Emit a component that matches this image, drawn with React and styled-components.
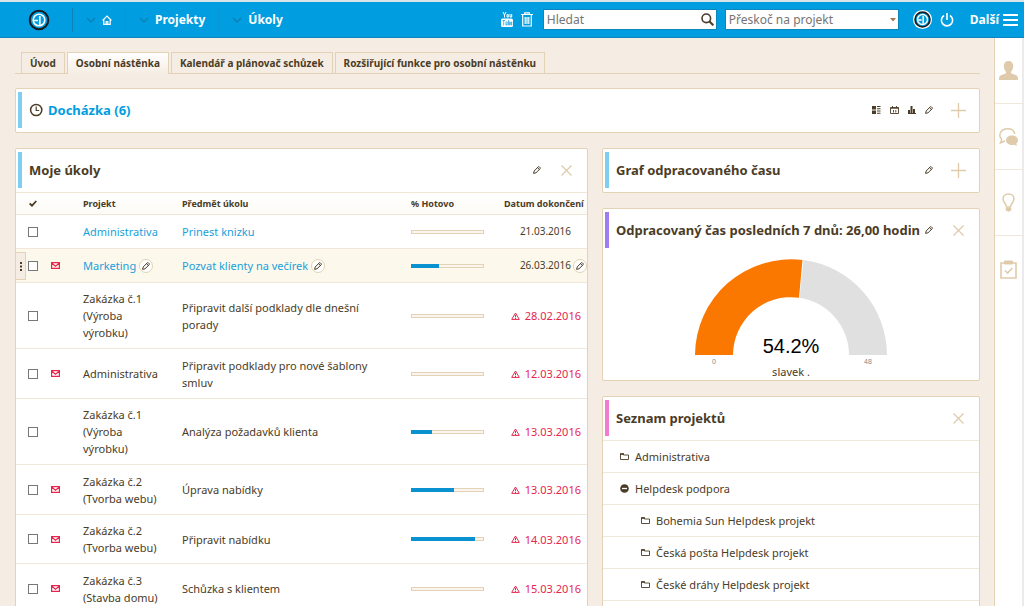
import React from "react";
import styled, { createGlobalStyle, css } from "styled-components";

const c = {
  blue: "#009ee0",
  link: "#1a9fdb",
  text: "#4a3c26",
  bg: "#f5ede3",
  line: "#e3d2b5",
  soft: "#f0e7d8",
  tan: "#dfcbab",
  red: "#e6264f",
};

const Global = createGlobalStyle`
  * { box-sizing: border-box; }
  html { scrollbar-width: none; }
  body { margin: 0; background: ${c.bg}; color: ${c.text};
    font: 11px/17px "Noto Sans", "Open Sans", sans-serif; }
  button { font: inherit; color: inherit; background: none; border: 0; padding: 0; margin: 0; cursor: pointer; }
  a { color: inherit; text-decoration: none; }
  svg { display: block; flex: none; }
`;

const Header = styled.header`
  display: flex;
  align-items: center;
  height: 38px;
  padding: 0 6px 0 28px;
  background: ${c.blue};
  border-top: 2px solid #d9e3e8;
  border-bottom: 1px solid #0b87bd;
  color: #fff;
  font-size: 12px;
  font-weight: 700;
`;

const MainNav = styled.nav`
  display: flex;
  align-items: center;
  margin-left: 22px;
  border-left: 1px solid #0b83b8;
  height: 24px;
  flex: 1;
`;

const NavItem = styled.a`
  display: flex;
  align-items: center;
  gap: 6px;
  height: 24px;
  padding: 0 13px;
  & + & { border-left: 1px solid #0597d6; }
`;

const Tools = styled.div`
  display: flex;
  align-items: center;
  gap: 8px;
`;

const SearchBox = styled.label`
  display: flex;
  align-items: center;
  width: 174px;
  height: 21px;
  margin-left: 2px;
  padding: 0 2px 0 3px;
  background: #fff;
  border: 1px solid #0b87bd;
`;

const Field = styled.input`
  flex: 1;
  min-width: 0;
  border: 0;
  outline: 0;
  padding: 0;
  background: none;
  font: inherit;
  font-weight: 400;
  &::placeholder { color: #757575; opacity: 1; }
`;

const JumpBox = styled(SearchBox)`
  margin-left: 0;
`;

const IconLink = styled.a`
  display: flex;
  margin-left: ${(p) => p.$gap || 0}px;
`;

const More = styled.button`
  display: flex;
  align-items: center;
  gap: 4px;
  margin-left: 8px;
  font-weight: 700;
`;

const Body = styled.div`
  display: flex;
  min-height: calc(100vh - 38px);
`;

const Main = styled.main`
  flex: 1;
  min-width: 0;
  padding: 14px 14px 15px 15px;
`;

const Tabs = styled.nav`
  display: flex;
  gap: 2px;
  padding-left: 6px;
  border-bottom: 1px solid ${c.line};
  margin-bottom: 14px;
`;

const Tab = styled.a`
  height: 21px;
  padding: 0 8px;
  border: 1px solid ${c.line};
  border-bottom: 0;
  font-size: 10px;
  line-height: 21px;
  font-weight: 700;
  white-space: nowrap;
  ${(p) => p.$active && css`
    height: 22px;
    margin-bottom: -1px;
    background: linear-gradient(#fff, ${c.bg});
  `}
`;

const Columns = styled.div`
  display: grid;
  grid-template-columns: minmax(0, 573fr) minmax(0, 378fr);
  gap: 14px;
  align-items: start;
  margin-top: 15px;
`;

const Stack = styled.div`
  display: flex;
  flex-direction: column;
  gap: 15px;
`;

const Card = styled.section`
  background: #fff;
  border: 1px solid ${c.line};
  border-radius: 2px;
`;

const CardHead = styled.div`
  display: flex;
  align-items: center;
  height: 43px;
  padding: 3px 13px 4px 2px;
`;

const Accent = styled.span`
  align-self: stretch;
  width: 4px;
  margin-right: 7px;
  background: ${(p) => p.$color};
`;

const Title = styled.h2`
  display: flex;
  align-items: center;
  gap: 5px;
  flex: 1;
  margin: 0;
  font-size: 13px;
  line-height: 20px;
  color: ${(p) => (p.$link ? "#009ee0" : c.text)};
  white-space: nowrap;
`;

const Actions = styled.div`
  display: flex;
  align-items: center;
  gap: 9px;
`;

const IconButton = styled.button`
  display: flex;
`;

const Toggle = styled(IconButton)`
  && { margin-left: 9px; }
`;

const TaskTable = styled.table`
  width: 100%;
  border-collapse: collapse;
  table-layout: fixed;
`;

const Col = styled.col`
  width: ${(p) => p.$w}px;
`;

const Th = styled.th`
  height: 22px;
  padding: 0;
  border-top: 1px solid ${c.soft};
  background: linear-gradient(#fff, #fcfaf4);
  font-size: 9px;
  text-align: left;
  white-space: nowrap;
`;

const CheckHead = styled.span`
  display: block;
  padding-left: 13px;
`;

const Row = styled.tr`
  background: ${(p) => (p.$hover ? "#fcf9ec" : "#fff")};
`;

const Td = styled.td`
  position: relative;
  height: ${(p) => p.$h || 34}px;
  padding: 7px 0;
  padding-right: ${(p) => p.$pr || 0}px;
  border-top: 1px solid ${c.soft};
`;

const Marks = styled.div`
  display: flex;
  align-items: center;
  gap: 13px;
  padding-left: 12px;
`;

const Check = styled.input`
  appearance: none;
  display: block;
  width: 10px;
  height: 10px;
  margin: 0;
  border: 1px solid #777;
  background: #fff;
`;

const Handle = styled.button`
  position: absolute;
  left: 0;
  top: 3px;
  width: 10px;
  height: 28px;
  display: flex;
  align-items: center;
  justify-content: center;
  && { border: 1px solid ${c.line}; border-left: 0; background: ${c.bg}; }
`;

const TaskLink = styled.a`
  color: ${(p) => (p.$blue ? c.link : c.text)};
`;

const EditRound = styled.button`
  display: inline-flex;
  align-items: center;
  justify-content: center;
  width: 14px;
  height: 14px;
  vertical-align: middle;
  && { margin: -3px 0 0 3px; border: 1px solid ${c.line}; border-radius: 50%; background: #fff; }
`;

const Bar = styled.div`
  width: 73px;
  height: 4px;
  border: 1px solid ${c.line};
  background: #faf6ee;
`;

const Fill = styled.div`
  height: 4px;
  margin: -1px 0 0 -1px;
  background: #0a91d0;
`;

const DateText = styled.span`
  display: flex;
  align-items: center;
  justify-content: flex-end;
  gap: 5px;
  font-size: ${(p) => (p.$late ? 11 : 10)}px;
  color: ${(p) => (p.$late ? c.red : c.text)};
`;

const DateEdit = styled.span`
  position: absolute;
  right: 0;
  top: 8px;
`;

const Gauge = styled.div`
  display: flex;
  flex-direction: column;
  align-items: center;
  padding-top: 7px;
  height: 128px;
  line-height: 12px;
`;

const ProjectList = styled.ul`
  list-style: none;
  margin: 0;
  padding: 0 0 24px;
`;

const Project = styled.li`
  display: flex;
  align-items: center;
  gap: 6px;
  height: 32px;
  padding-left: ${(p) => (p.$child ? 38 : 17)}px;
  border-top: 1px solid ${c.soft};
  &:last-child { height: 33px; border-bottom: 1px solid ${c.soft}; }
`;

const Side = styled.aside`
  width: 30px;
  background: #fff;
  border-left: 1px solid ${c.line};
  border-right: 2px solid #eceaea;
`;

const SideItem = styled.a`
  display: flex;
  align-items: center;
  justify-content: center;
  height: 66px;
  border-bottom: 1px solid ${c.soft};
  &:last-child { border-bottom: 0; }
`;

const Logo = ({ ring, size }) => (
  <svg width={size} height={size} viewBox="0 0 22 22" fill="none">
    {ring && <circle cx="11" cy="11" r="11" fill="#fff" />}
    <circle cx="11" cy="11" r={ring ? 8.6 : 9.3} fill={c.blue} stroke="#1b1a1d" strokeWidth="2" />
    <circle cx="11" cy="11" r="5.8" stroke="#fff" strokeWidth="1.6" />
    <path d="M6 11.500h4M11.800 7v9" stroke="#fff" strokeWidth="1.700" />
  </svg>
);
const Chevron = () => (
  <svg width="10" height="6" viewBox="0 0 10 6" fill="none" stroke="#0b7fb4" strokeWidth="1.400"><path d="M1 1l4 4 4-4" /></svg>
);
const Home = () => (
  <svg width="10" height="10" viewBox="0 0 10 10" fill="none" stroke="#fff" strokeWidth="1.200"><path d="M.6 5.500L5 1l4.400 4.500M1.800 4.700v4.600h6.400V4.700M4.200 9V6.500h1.600V9" /></svg>
);
const YouTube = () => (
  <svg width="12" height="15" viewBox="0 0 12 15">
    <path d="M2 0l1.500 3v2.500M5 0L3.500 3M6 2.500v2.600h1.300V2.500zM9 2v3h1.700V2" fill="none" stroke="#fff" strokeWidth="1" />
    <rect y="6.500" width="12" height="8.500" rx="1.500" fill="#fff" />
    <path d="M1.500 8.500h2.500M2.700 8.500v5M5 9.500v3.500h1.200V9.500M7.600 8v5h1V10h-1M10.800 11.600v1.400h-1v-3h1v1.300h-1" fill="none" stroke={c.blue} strokeWidth=".7" />
  </svg>
);
const Trash = () => (
  <svg width="12" height="15" viewBox="0 0 12 15" fill="none" stroke="#fff" strokeWidth="1.200">
    <path d="M0 2.500h12M3.700 2V.8h4.600V2M1.700 3v11h8.600V3M4.200 5v7M6 5v7M7.800 5v7" />
  </svg>
);
const Search = () => (
  <svg width="13" height="13" viewBox="0 0 13 13" fill="none" stroke={c.text} strokeWidth="1.600"><circle cx="5.300" cy="5.300" r="4.300" /><path d="M8.300 8.300l4 4" strokeWidth="2" /></svg>
);
const Caret = () => (
  <svg width="6" height="4" viewBox="0 0 6 4" fill="#a9764f"><path d="M0 0h6L3 3.500z" /></svg>
);
const Power = () => (
  <svg width="14" height="14" viewBox="0 0 14 14" fill="none" stroke="#fff" strokeWidth="1.600"><path d="M4 2.500a5.600 5.600 0 1 0 6 0M7 0v7" /></svg>
);
const Burger = () => (
  <svg width="15" height="12" viewBox="0 0 15 12" stroke="#fff" strokeWidth="2"><path d="M0 1h15M0 6h15M0 11h15" /></svg>
);
const Clock = () => (
  <svg width="14" height="14" viewBox="0 0 14 14" fill="none" stroke={c.text} strokeWidth="1.500"><circle cx="7.200" cy="7" r="5.600" /><path d="M7.200 3.500v4h3" strokeWidth="1.200" /></svg>
);
const Pencil = () => (
  <svg width="8" height="8" viewBox="0 0 8 8" fill="none" stroke={c.text} strokeWidth="1"><path d="M.6 7.400l.6-2.400L5.300.8a.7.7 0 0 1 1 0l.9.900a.7.7 0 0 1 0 1L3 6.800zM4.600 1.800l1.700 1.600" /></svg>
);
const Plus = () => (
  <svg width="15" height="15" viewBox="0 0 15 15" stroke={c.tan} strokeWidth="1.300"><path d="M7.500 0v15M0 7.500h15" /></svg>
);
const Cross = () => (
  <svg width="15" height="15" viewBox="0 0 15 15" stroke={c.tan} strokeWidth="1.300"><path d="M2.500 2.500l10 10M12.500 2.500l-10 10" /></svg>
);
const ListIcon = () => (
  <svg width="9" height="8" viewBox="0 0 9 8" fill={c.text}><path d="M0 0h4v3.500H0zM0 4.500h4V8H0zM5 0h3.500v1H5zM5 2.200h3.500v1H5zM5 4.600h3.500v1H5zM5 6.800h3.500v1H5z" /></svg>
);
const CalendarIcon = () => (
  <svg width="9" height="8" viewBox="0 0 9 8" fill="none" stroke={c.text}><path d="M.5 1.500h8v6h-8zM.5 2.300h8M2.500 0v2M6.500 0v2M3.500 4v2.500M5.800 4v2.500" strokeWidth=".9" /></svg>
);
const ChartIcon = () => (
  <svg width="8" height="8" viewBox="0 0 8 8" fill={c.text}><path d="M0 4h2v3H0zM2.500 0h2v7h-2zM5 3h2v4H5zM0 7h8v1H0z" /></svg>
);
const Mail = () => (
  <svg width="9" height="7" viewBox="0 0 9 7" fill="none" stroke={c.red} strokeWidth="1.200"><path d="M.6.600h7.800v5.800H.6zM.8 1.200L4.500 4.200l3.700-3" /></svg>
);
const Alert = () => (
  <svg width="9" height="8" viewBox="0 0 9 8" fill="none" stroke={c.red} strokeWidth="1"><path d="M4.500 1l3.800 6.400H.7zM4.500 3v2.300M4.500 6v1" /></svg>
);
const Tick = () => (
  <svg width="8" height="7" viewBox="0 0 8 7" fill="none" stroke={c.text} strokeWidth="1.800"><path d="M.7 3.500L3 5.700 7.300 1" /></svg>
);
const Dots = () => (
  <svg width="2" height="9" viewBox="0 0 2 9" fill={c.text}><path d="M0 0h2v2H0zM0 3.500h2v2H0zM0 7h2v2H0z" /></svg>
);
const Folder = () => (
  <svg width="9" height="7" viewBox="0 0 9 7" fill="none" stroke={c.text}><path d="M.5 6.500V1h3v1h5v4.500z" strokeWidth=".9" /><path d="M0 1h4" strokeWidth="1.500" /></svg>
);
const Minus = () => (
  <svg width="9" height="9" viewBox="0 0 9 9"><circle cx="4.500" cy="4.500" r="4.300" fill={c.text} /><path d="M2 4.500h5" stroke="#fff" strokeWidth="1.300" /></svg>
);
const Person = () => (
  <svg width="19" height="19" viewBox="0 0 19 19" fill={c.tan}><path d="M9.500 0c3 0 4.700 2 4.700 5 0 2.500-1 4.500-2.200 5.700v1.600l5 2c1.400.6 2 1.300 2 4.700H0c0-3.400.6-4.100 2-4.700l5-2v-1.600C5.800 9.500 4.800 7.500 4.800 5c0-3 1.700-5 4.700-5z" /></svg>
);
const Chat = () => (
  <svg width="19" height="18" viewBox="0 0 19 18"><path d="M2.800 11.500C1.500 10.300.8 9 .8 7.300c0-3.700 3.300-6.500 7.500-6.500 4 0 7 2 7.500 5M2.800 11.500L1.500 14.800 6 13" fill="none" stroke={c.tan} strokeWidth="1.500" /><path d="M13 7.500c3.300 0 6 2 6 4.700 0 1.400-.7 2.500-1.700 3.300l.7 2.500-2.800-1.300c-4 .9-8.200-1-8.200-4.500 0-2.700 2.700-4.700 6-4.700z" fill={c.tan} /></svg>
);
const Bulb = () => (
  <svg width="13" height="19" viewBox="0 0 13 19" fill="none" stroke={c.tan} strokeWidth="1.500"><path d="M4.500 14c0-3-3.500-5-3.500-8C1 3 3.300 1 6.500 1S12 3 12 6c0 3-3.500 5-3.500 8z" /><path d="M4.500 15.500h4v1.500L6.500 18l-2-1z" fill={c.tan} /></svg>
);
const Clipboard = () => (
  <svg width="17" height="19" viewBox="0 0 17 19" fill="none" stroke={c.tan} strokeWidth="1.600"><path d="M1 3h15v15H1z" /><path d="M4.500 1h8v3h-8z" fill={c.tan} strokeWidth="1" /><path d="M5 10.500l2.500 2.500L12.500 8" /></svg>
);

const GaugeChart = () => (
  <svg width="192" height="107" viewBox="0 0 192 107" role="img" aria-label="54.2%">
    <path d="M0 96A96 96 0 0 1 107.500 1L104 38.700A58 58 0 0 0 38 96z" fill="#fb7800" />
    <path d="M108.500 1A96 96 0 0 1 192 96h-38A58 58 0 0 0 104.500 38.700z" fill="#e0e0e0" />
    <g textAnchor="middle" fontFamily="Liberation Sans, Arial, sans-serif">
      <text x="96" y="94" fontSize="20" fill="#010101">54.2%</text>
      <text x="19" y="105" fontSize="7" fill="#888">0</text>
      <text x="173" y="105" fontSize="7" fill="#888">48</text>
    </g>
  </svg>
);

const tasks = [
  { project: "Administrativa", subject: "Prinest knizku", done: 0, date: "21.03.2016", blue: true, h: 34 },
  { project: "Marketing", subject: "Pozvat klienty na večírek", done: 40, date: "26.03.2016", blue: true, mail: true, hover: true, h: 34 },
  { project: "Zakázka č.1 (Výroba výrobku)", subject: "Připravit další podklady dle dnešní porady", done: 0, date: "28.02.2016", late: true, h: 66 },
  { project: "Administrativa", subject: "Připravit podklady pro nové šablony smluv", done: 0, date: "12.03.2016", late: true, mail: true, h: 50 },
  { project: "Zakázka č.1 (Výroba výrobku)", subject: "Analýza požadavků klienta", done: 30, date: "13.03.2016", late: true, h: 66 },
  { project: "Zakázka č.2 (Tvorba webu)", subject: "Úprava nabídky", done: 60, date: "13.03.2016", late: true, mail: true, h: 50 },
  { project: "Zakázka č.2 (Tvorba webu)", subject: "Připravit nabídku", done: 90, date: "14.03.2016", late: true, mail: true, h: 49 },
  { project: "Zakázka č.3 (Stavba domu)", subject: "Schůzka s klientem", done: 0, date: "15.03.2016", late: true, mail: true, h: 50 },
];

const projects = [
  { name: "Administrativa" },
  { name: "Helpdesk podpora", open: true },
  { name: "Bohemia Sun Helpdesk projekt", child: true },
  { name: "Česká pošta Helpdesk projekt", child: true },
  { name: "České dráhy Helpdesk projekt", child: true },
];

const Edit = ({ round }) => {
  const Button = round ? EditRound : IconButton;
  return <Button type="button" aria-label="Upravit"><Pencil /></Button>;
};

const TaskRow = ({ t }) => (
  <Row $hover={t.hover}>
    <Td $h={t.h}>
      {t.hover && <Handle type="button" aria-label="Možnosti"><Dots /></Handle>}
      <Marks>
        <Check type="checkbox" aria-label={t.subject} />
        {t.mail && <Mail />}
      </Marks>
    </Td>
    <Td $pr={18}><TaskLink href="#" $blue={t.blue}>{t.project}</TaskLink>{t.hover && <Edit round />}</Td>
    <Td $pr={30}><TaskLink href="#" $blue={t.blue}>{t.subject}</TaskLink>{t.hover && <Edit round />}</Td>
    <Td><Bar>{t.done > 0 && <Fill style={{ width: `${t.done}%` }} />}</Bar></Td>
    <Td $pr={t.late ? 6 : 16}>
      <DateText $late={t.late}>{t.late && <Alert />}{t.date}</DateText>
      {t.hover && <DateEdit><Edit round /></DateEdit>}
    </Td>
  </Row>
);

export default function App() {
  return (
    <>
      <Global />
      <Header>
        <IconLink href="#" aria-label="Easy"><Logo size={22} /></IconLink>
        <MainNav>
          <NavItem href="#" aria-label="Domů"><Chevron /><Home /></NavItem>
          <NavItem href="#"><Chevron />Projekty</NavItem>
          <NavItem href="#"><Chevron />Úkoly</NavItem>
        </MainNav>
        <Tools>
          <IconLink href="#" aria-label="YouTube"><YouTube /></IconLink>
          <IconLink href="#" aria-label="Koš"><Trash /></IconLink>
          <SearchBox><Field aria-label="Hledat" placeholder="Hledat" /><Search /></SearchBox>
          <JumpBox><Field aria-label="Přeskoč na projekt" placeholder="Přeskoč na projekt" /><Caret /></JumpBox>
          <IconLink href="#" aria-label="Profil" $gap={6}><Logo size={19} ring /></IconLink>
          <IconLink href="#" aria-label="Odhlásit"><Power /></IconLink>
          <More type="button">Další<Burger /></More>
        </Tools>
      </Header>
      <Body>
        <Main>
          <Tabs>
            <Tab href="#">Úvod</Tab>
            <Tab href="#" $active>Osobní nástěnka</Tab>
            <Tab href="#">Kalendář a plánovač schůzek</Tab>
            <Tab href="#">Rozšiřující funkce pro osobní nástěnku</Tab>
          </Tabs>
          <Card>
            <CardHead>
              <Accent $color="#7ecef2" />
              <Title $link><Clock />Docházka (6)</Title>
              <Actions>
                <ListIcon /><CalendarIcon /><ChartIcon /><Edit />
                <Toggle type="button" aria-label="Rozbalit"><Plus /></Toggle>
              </Actions>
            </CardHead>
          </Card>
          <Columns>
            <Card>
              <CardHead>
                <Accent $color="#7ecef2" />
                <Title>Moje úkoly</Title>
                <Actions><Edit /><Toggle type="button" aria-label="Sbalit"><Cross /></Toggle></Actions>
              </CardHead>
              <TaskTable>
                <colgroup>
                  <Col $w={67} />
                  <Col $w={99} />
                  <col />
                  <Col $w={93} />
                  <Col $w={83} />
                </colgroup>
                <thead>
                  <tr>
                    <Th><CheckHead><Tick /></CheckHead></Th>
                    <Th>Projekt</Th>
                    <Th>Předmět úkolu</Th>
                    <Th>% Hotovo</Th>
                    <Th>Datum dokončení</Th>
                  </tr>
                </thead>
                <tbody>
                  {tasks.map((t, i) => <TaskRow key={i} t={t} />)}
                </tbody>
              </TaskTable>
            </Card>
            <Stack>
              <Card>
                <CardHead>
                  <Accent $color="#7ecef2" />
                  <Title>Graf odpracovaného času</Title>
                  <Actions><Edit /><Toggle type="button" aria-label="Rozbalit"><Plus /></Toggle></Actions>
                </CardHead>
              </Card>
              <Card>
                <CardHead>
                  <Accent $color="#9d7df0" />
                  <Title>Odpracovaný čas posledních 7 dnů: 26,00 hodin</Title>
                  <Actions><Edit /><Toggle type="button" aria-label="Sbalit"><Cross /></Toggle></Actions>
                </CardHead>
                <Gauge><GaugeChart />slavek .</Gauge>
              </Card>
              <Card>
                <CardHead>
                  <Accent $color="#f07dd0" />
                  <Title>Seznam projektů</Title>
                  <Toggle type="button" aria-label="Sbalit"><Cross /></Toggle>
                </CardHead>
                <ProjectList>
                  {projects.map((p) => (
                    <Project key={p.name} $child={p.child}>
                      {p.open ? <Minus /> : <Folder />}<a href="#">{p.name}</a>
                    </Project>
                  ))}
                </ProjectList>
              </Card>
            </Stack>
          </Columns>
        </Main>
        <Side>
          <SideItem href="#" aria-label="Uživatel"><Person /></SideItem>
          <SideItem href="#" aria-label="Chat"><Chat /></SideItem>
          <SideItem href="#" aria-label="Nápady"><Bulb /></SideItem>
          <SideItem href="#" aria-label="Úkoly"><Clipboard /></SideItem>
        </Side>
      </Body>
    </>
  );
}
